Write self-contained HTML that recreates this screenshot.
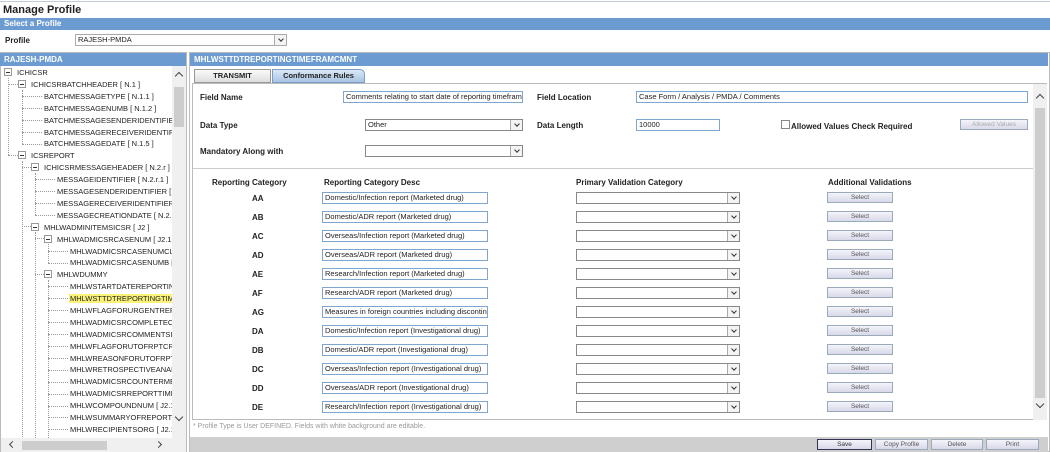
<!DOCTYPE html>
<html><head><meta charset="utf-8"><style>
*{box-sizing:border-box;margin:0;padding:0}
body{width:1050px;height:452px;overflow:hidden;background:#fff;font-family:"Liberation Sans",Arial,sans-serif;font-size:8px;color:#222;position:relative}
.a{position:absolute;white-space:nowrap}
.bar{position:absolute;background:#6b9bd1;color:#fff;font-weight:bold;font-size:8px;padding-left:4px;line-height:13px}
.b{font-weight:bold}
.inp{position:absolute;border:1px solid #7fa6cf;background:#fff;height:12px;line-height:10px;padding-left:2px;font-size:7.5px;overflow:hidden;white-space:nowrap}
.sel{position:absolute;border:1px solid #888;background:#fff;height:12px;line-height:10px;padding-left:2px;font-size:7.5px}
.sel:after{content:"";position:absolute;right:0;top:0;width:11px;height:10px;border-left:1px solid #aaa;background:#f4f4f4}
.sel i{position:absolute;right:3px;top:2px;width:4px;height:4px;border-right:1.3px solid #333;border-bottom:1.3px solid #333;transform:rotate(45deg);z-index:2}
.btn{position:absolute;border:1px solid #9ab;background:linear-gradient(#f4f4fa,#d8d8ea);height:11px;line-height:9px;text-align:center;font-size:6.5px;color:#555}
.t{position:absolute;white-space:nowrap;font-size:7.5px;color:#222;line-height:9px}
.dot{position:absolute;border-left:1px dotted #999}
.hd{position:absolute;border-top:1px dotted #999}
.bx{position:absolute;width:8px;height:8px;border:1px solid #999;background:#fff}
.bx:after{content:"";position:absolute;left:1px;top:3px;width:4px;height:1px;background:#333}
</style></head><body>
<div class="a b" style="left:3px;top:4px;font-size:11px">Manage Profile</div>
<div style="position:absolute;left:0;top:1px;width:1050px;border-top:1px solid #bcd"></div>
<div class="bar" style="left:0;top:18px;width:1050px;height:12px;line-height:12px">Select a Profile</div>
<div class="a b" style="left:5px;top:36px">Profile</div>
<div class="sel" style="left:75px;top:34px;width:212px;border-color:#aaa">RAJESH-PMDA<i></i></div>

<!-- left panel -->
<div style="position:absolute;left:0;top:52px;width:187px;height:400px;border:1px solid #bbb"></div>
<div class="bar" style="left:0;top:53px;width:186px;height:13px">RAJESH-PMDA</div>
<div style="position:absolute;left:1px;top:66px;width:171px;height:372px;overflow:hidden">
<div class="dot" style="left:7px;top:12px;height:77px"></div>
<div class="dot" style="left:21px;top:24px;height:54px"></div>
<div class="dot" style="left:21px;top:95px;height:280px"></div>
<div class="dot" style="left:34px;top:107px;height:42px"></div>
<div class="dot" style="left:34px;top:166px;height:210px"></div>
<div class="dot" style="left:47px;top:178px;height:19px"></div>
<div class="dot" style="left:47px;top:214px;height:160px"></div>

<div class="hd" style="left:7px;top:18px;width:10px"></div>
<div class="hd" style="left:7px;top:89px;width:10px"></div>
<div class="hd" style="left:21px;top:101px;width:9px"></div>
<div class="hd" style="left:21px;top:160px;width:9px"></div>
<div class="hd" style="left:34px;top:172px;width:9px"></div>
<div class="hd" style="left:34px;top:208px;width:9px"></div>

<div class="bx" style="left:3px;top:2px"></div><div class="t" style="left:16px;top:2px">ICHICSR</div>
<div class="bx" style="left:17px;top:14px"></div><div class="t" style="left:30px;top:14px">ICHICSRBATCHHEADER [ N.1 ]</div>
<div class="hd" style="left:21px;top:30px;width:20px"></div><div class="t" style="left:43px;top:26px">BATCHMESSAGETYPE [ N.1.1 ]</div>
<div class="hd" style="left:21px;top:42px;width:20px"></div><div class="t" style="left:43px;top:38px">BATCHMESSAGENUMB [ N.1.2 ]</div>
<div class="hd" style="left:21px;top:54px;width:20px"></div><div class="t" style="left:43px;top:50px">BATCHMESSAGESENDERIDENTIFIER [ N.1.3 ]</div>
<div class="hd" style="left:21px;top:66px;width:20px"></div><div class="t" style="left:43px;top:62px">BATCHMESSAGERECEIVERIDENTIFIER [ N.1.4 ]</div>
<div class="hd" style="left:21px;top:78px;width:20px"></div><div class="t" style="left:43px;top:73px">BATCHMESSAGEDATE [ N.1.5 ]</div>
<div class="bx" style="left:17px;top:85px"></div><div class="t" style="left:30px;top:85px">ICSREPORT</div>
<div class="bx" style="left:30px;top:97px"></div><div class="t" style="left:43px;top:97px">ICHICSRMESSAGEHEADER [ N.2.r ]</div>
<div class="hd" style="left:34px;top:113px;width:20px"></div><div class="t" style="left:56px;top:109px">MESSAGEIDENTIFIER [ N.2.r.1 ]</div>
<div class="hd" style="left:34px;top:125px;width:20px"></div><div class="t" style="left:56px;top:121px">MESSAGESENDERIDENTIFIER [ N.2.r.2 ]</div>
<div class="hd" style="left:34px;top:137px;width:20px"></div><div class="t" style="left:56px;top:133px">MESSAGERECEIVERIDENTIFIER [ N.2.r.3 ]</div>
<div class="hd" style="left:34px;top:149px;width:20px"></div><div class="t" style="left:56px;top:145px">MESSAGECREATIONDATE [ N.2.r.4 ]</div>
<div class="bx" style="left:30px;top:157px"></div><div class="t" style="left:43px;top:157px">MHLWADMINITEMSICSR [ J2 ]</div>
<div class="bx" style="left:43px;top:169px"></div><div class="t" style="left:56px;top:169px">MHLWADMICSRCASENUM [ J2.1 ]</div>
<div class="hd" style="left:47px;top:185px;width:20px"></div><div class="t" style="left:69px;top:181px">MHLWADMICSRCASENUMCLASS</div>
<div class="hd" style="left:47px;top:197px;width:20px"></div><div class="t" style="left:69px;top:192px">MHLWADMICSRCASENUMB [ J2.1b ]</div>
<div class="bx" style="left:43px;top:204px"></div><div class="t" style="left:56px;top:204px">MHLWDUMMY</div>
<div class="hd" style="left:47px;top:220px;width:20px"></div><div class="t" style="left:69px;top:216px">MHLWSTARTDATEREPORTING</div>
<div class="hd" style="left:47px;top:232px;width:20px"></div><div class="t" style="left:68px;top:228px;background:#fbf27a;padding:0 1px">MHLWSTTDTREPORTINGTIMEFRAMCMNT</div>
<div class="hd" style="left:47px;top:244px;width:20px"></div><div class="t" style="left:69px;top:240px">MHLWFLAGFORURGENTREPORT</div>
<div class="hd" style="left:47px;top:256px;width:20px"></div><div class="t" style="left:69px;top:252px">MHLWADMICSRCOMPLETECLASS</div>
<div class="hd" style="left:47px;top:268px;width:20px"></div><div class="t" style="left:69px;top:264px">MHLWADMICSRCOMMENTSINFO</div>
<div class="hd" style="left:47px;top:280px;width:20px"></div><div class="t" style="left:69px;top:276px">MHLWFLAGFORUTOFRPTCRITERIA</div>
<div class="hd" style="left:47px;top:292px;width:20px"></div><div class="t" style="left:69px;top:288px">MHLWREASONFORUTOFRPTCRI</div>
<div class="hd" style="left:47px;top:304px;width:20px"></div><div class="t" style="left:69px;top:299px">MHLWRETROSPECTIVEANALYSIS</div>
<div class="hd" style="left:47px;top:316px;width:20px"></div><div class="t" style="left:69px;top:311px">MHLWADMICSRCOUNTERMEASURE</div>
<div class="hd" style="left:47px;top:328px;width:20px"></div><div class="t" style="left:69px;top:323px">MHLWADMICSRREPORTTIME</div>
<div class="hd" style="left:47px;top:340px;width:20px"></div><div class="t" style="left:69px;top:335px">MHLWCOMPOUNDNUM [ J2.12 ]</div>
<div class="hd" style="left:47px;top:351px;width:20px"></div><div class="t" style="left:69px;top:347px">MHLWSUMMARYOFREPORTCMNT</div>
<div class="hd" style="left:47px;top:363px;width:20px"></div><div class="t" style="left:69px;top:359px">MHLWRECIPIENTSORG [ J2.18 ]</div>
<div class="t" style="left:69px;top:371px">MHLWRECIPIENTSTITLE [ J2.19 ]</div>
</div>
<div style="position:absolute;left:172px;top:66px;width:14px;height:372px;background:#f0f0f0"></div>
<div style="position:absolute;left:174px;top:87px;width:10px;height:40px;background:#cdcdcd"></div>
<div class="a" style="left:176px;top:73px;width:6px;height:6px;border-left:1.5px solid #444;border-top:1.5px solid #444;transform:rotate(45deg)"></div>
<div class="a" style="left:176px;top:414px;width:6px;height:6px;border-right:1.5px solid #444;border-bottom:1.5px solid #444;transform:rotate(45deg)"></div>
<div style="position:absolute;left:1px;top:438px;width:185px;height:14px;background:#f0f0f0"></div>
<div style="position:absolute;left:22px;top:441px;width:85px;height:9px;background:#cdcdcd"></div>
<div class="a" style="left:10px;top:442px;width:5px;height:5px;border-left:1.5px solid #444;border-bottom:1.5px solid #444;transform:rotate(45deg)"></div>
<div class="a" style="left:156px;top:442px;width:5px;height:5px;border-right:1.5px solid #444;border-top:1.5px solid #444;transform:rotate(45deg)"></div>

<!-- right panel -->
<div style="position:absolute;left:189px;top:52px;width:861px;height:400px;border:1px solid #bbb"></div>
<div class="bar" style="left:190px;top:53px;width:858px;height:13px">MHLWSTTDTREPORTINGTIMEFRAMCMNT</div>
<div class="a b" style="left:194px;top:69px;width:77px;height:14px;border:1px solid #999;background:linear-gradient(#fafafa,#ddd);text-align:center;line-height:12px;font-size:7.5px">TRANSMIT</div>
<div class="a b" style="left:272px;top:69px;width:93px;height:14px;border:1px solid #7a9cc6;background:linear-gradient(#dbe7f5,#a9c3e3);text-align:center;line-height:12px;font-size:7.5px;border-radius:0 5px 0 0">Conformance Rules</div>
<div style="position:absolute;left:192px;top:83px;width:842px;height:337px;border:1px solid #bbb;border-right:none"></div>
<div style="position:absolute;left:193px;top:168px;width:840px;border-top:1px solid #ccc"></div>
<div style="position:absolute;left:1033px;top:83px;width:14px;height:337px;background:#f0f0f0;border-top:1px solid #bbb"></div>
<div style="position:absolute;left:1035px;top:108px;width:10px;height:290px;background:#cdcdcd"></div>
<div class="a" style="left:1037px;top:95px;width:6px;height:6px;border-left:1.5px solid #444;border-top:1.5px solid #444;transform:rotate(45deg)"></div>
<div class="a" style="left:1037px;top:401px;width:6px;height:6px;border-right:1.5px solid #444;border-bottom:1.5px solid #444;transform:rotate(45deg)"></div>

<div class="a b" style="left:200px;top:93px">Field Name</div>
<div class="inp" style="left:343px;top:91px;width:180px">Comments relating to start date of reporting timeframe</div>
<div class="a b" style="left:537px;top:93px">Field Location</div>
<div class="inp" style="left:636px;top:91px;width:392px">Case Form / Analysis / PMDA / Comments</div>
<div class="a b" style="left:200px;top:121px">Data Type</div>
<div class="sel" style="left:365px;top:119px;width:158px">Other<i></i></div>
<div class="a b" style="left:537px;top:121px">Data Length</div>
<div class="inp" style="left:636px;top:119px;width:84px">10000</div>
<div class="a" style="left:781px;top:120px;width:9px;height:9px;border:1px solid #888;background:#fff"></div>
<div class="a b" style="left:791px;top:122px">Allowed Values Check Required</div>
<div class="btn" style="left:960px;top:119px;width:68px;color:#aaa">Allowed Values</div>
<div class="a b" style="left:200px;top:147px">Mandatory Along with</div>
<div class="sel" style="left:365px;top:145px;width:158px"><i></i></div>

<div class="a b" style="left:212px;top:178px">Reporting Category</div>
<div class="a b" style="left:324px;top:178px">Reporting Category Desc</div>
<div class="a b" style="left:576px;top:178px">Primary Validation Category</div>
<div class="a b" style="left:828px;top:178px">Additional Validations</div>

<div style="position:absolute;left:0;top:192px">
<div style="position:relative;height:19px"><div class="a b" style="left:252px;top:2px">AA</div><div class="inp" style="left:322px;top:0;width:166px">Domestic/Infection report (Marketed drug)</div><div class="sel" style="left:576px;top:0;width:164px"><i></i></div><div class="btn" style="left:827px;top:0;width:66px">Select</div></div>
<div style="position:relative;height:19px"><div class="a b" style="left:252px;top:2px">AB</div><div class="inp" style="left:322px;top:0;width:166px">Domestic/ADR report (Marketed drug)</div><div class="sel" style="left:576px;top:0;width:164px"><i></i></div><div class="btn" style="left:827px;top:0;width:66px">Select</div></div>
<div style="position:relative;height:19px"><div class="a b" style="left:252px;top:2px">AC</div><div class="inp" style="left:322px;top:0;width:166px">Overseas/Infection report (Marketed drug)</div><div class="sel" style="left:576px;top:0;width:164px"><i></i></div><div class="btn" style="left:827px;top:0;width:66px">Select</div></div>
<div style="position:relative;height:19px"><div class="a b" style="left:252px;top:2px">AD</div><div class="inp" style="left:322px;top:0;width:166px">Overseas/ADR report (Marketed drug)</div><div class="sel" style="left:576px;top:0;width:164px"><i></i></div><div class="btn" style="left:827px;top:0;width:66px">Select</div></div>
<div style="position:relative;height:19px"><div class="a b" style="left:252px;top:2px">AE</div><div class="inp" style="left:322px;top:0;width:166px">Research/Infection report (Marketed drug)</div><div class="sel" style="left:576px;top:0;width:164px"><i></i></div><div class="btn" style="left:827px;top:0;width:66px">Select</div></div>
<div style="position:relative;height:19px"><div class="a b" style="left:252px;top:2px">AF</div><div class="inp" style="left:322px;top:0;width:166px">Research/ADR report (Marketed drug)</div><div class="sel" style="left:576px;top:0;width:164px"><i></i></div><div class="btn" style="left:827px;top:0;width:66px">Select</div></div>
<div style="position:relative;height:19px"><div class="a b" style="left:252px;top:2px">AG</div><div class="inp" style="left:322px;top:0;width:166px">Measures in foreign countries including discontinuation</div><div class="sel" style="left:576px;top:0;width:164px"><i></i></div><div class="btn" style="left:827px;top:0;width:66px">Select</div></div>
<div style="position:relative;height:19px"><div class="a b" style="left:252px;top:2px">DA</div><div class="inp" style="left:322px;top:0;width:166px">Domestic/Infection report (Investigational drug)</div><div class="sel" style="left:576px;top:0;width:164px"><i></i></div><div class="btn" style="left:827px;top:0;width:66px">Select</div></div>
<div style="position:relative;height:19px"><div class="a b" style="left:252px;top:2px">DB</div><div class="inp" style="left:322px;top:0;width:166px">Domestic/ADR report (Investigational drug)</div><div class="sel" style="left:576px;top:0;width:164px"><i></i></div><div class="btn" style="left:827px;top:0;width:66px">Select</div></div>
<div style="position:relative;height:19px"><div class="a b" style="left:252px;top:2px">DC</div><div class="inp" style="left:322px;top:0;width:166px">Overseas/Infection report (Investigational drug)</div><div class="sel" style="left:576px;top:0;width:164px"><i></i></div><div class="btn" style="left:827px;top:0;width:66px">Select</div></div>
<div style="position:relative;height:19px"><div class="a b" style="left:252px;top:2px">DD</div><div class="inp" style="left:322px;top:0;width:166px">Overseas/ADR report (Investigational drug)</div><div class="sel" style="left:576px;top:0;width:164px"><i></i></div><div class="btn" style="left:827px;top:0;width:66px">Select</div></div>
<div style="position:relative;height:19px"><div class="a b" style="left:252px;top:2px">DE</div><div class="inp" style="left:322px;top:0;width:166px">Research/Infection report (Investigational drug)</div><div class="sel" style="left:576px;top:0;width:164px"><i></i></div><div class="btn" style="left:827px;top:0;width:66px">Select</div></div>
</div>

<div class="a" style="left:193px;top:423px;font-size:7px;color:#999">* Profile Type is User DEFINED. Fields with white background are editable.</div>
<div style="position:absolute;left:190px;top:437px;width:858px;height:15px;background:#cfcfcf"></div>
<div class="btn" style="left:817px;top:439px;width:55px;border-color:#335;color:#333">Save</div>
<div class="btn" style="left:875px;top:439px;width:53px">Copy Profile</div>
<div class="btn" style="left:931px;top:439px;width:52px">Delete</div>
<div class="btn" style="left:986px;top:439px;width:53px">Print</div>
</body></html>
